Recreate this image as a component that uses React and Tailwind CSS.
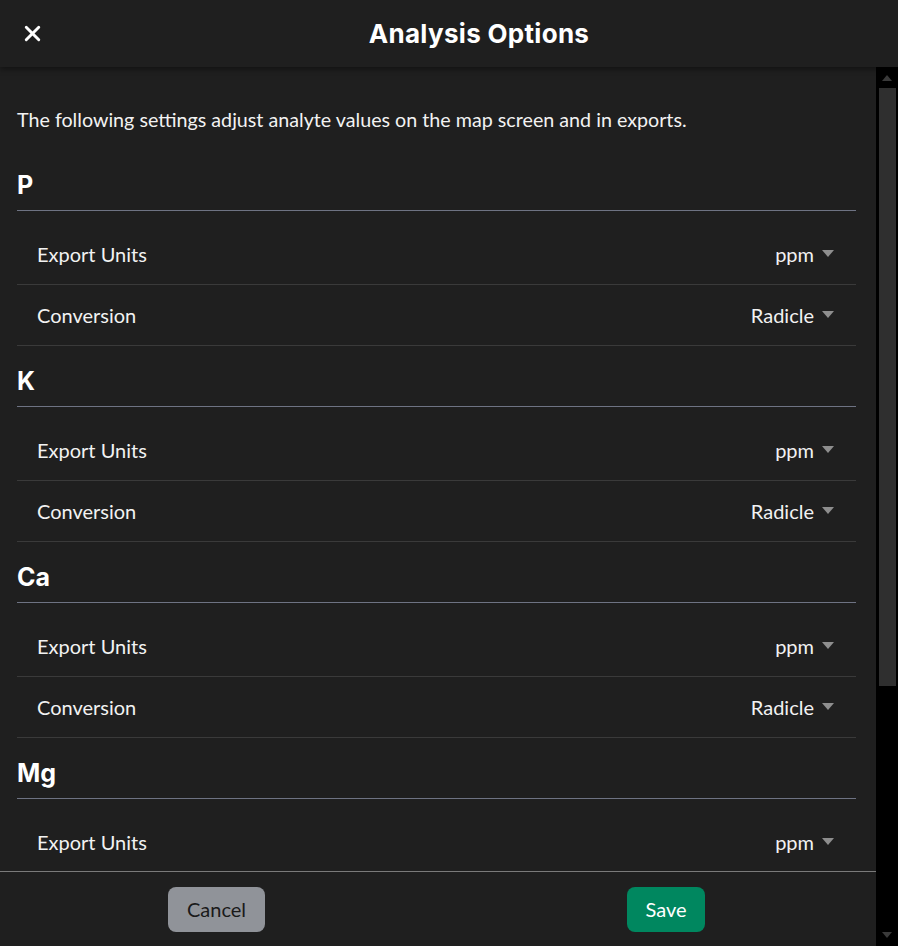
import { X } from "lucide-react";

const sections = ["P", "K", "Ca", "Mg"];

function Caret() {
  return (
    <svg width="12" height="7" viewBox="0 0 12 7" className="ml-[8px] mt-[-2px]">
      <path d="M0 0 L12 0 L6 7 Z" fill="#8e8e8e" />
    </svg>
  );
}

function Row({ label, value }) {
  return (
    <div className="flex h-[61px] items-center justify-between border-b border-[#3a3a3a] pl-[20px] pr-[22px]">
      <span className="text-[20px] text-[#f2f2f2]">{label}</span>
      <span className="flex items-center text-[20px] text-[#f2f2f2]">
        {value}
        <Caret />
      </span>
    </div>
  );
}

export default function App() {
  return (
    <div
      className="flex h-[946px] w-[898px] flex-col bg-[#1f1f1f] text-white"
      style={{ fontFamily: "Lato, 'Open Sans', sans-serif" }}
    >
      {/* Header */}
      <div className="relative z-10 flex h-[67px] shrink-0 items-center bg-[#1f1f1f] shadow-[0_2px_6px_rgba(0,0,0,0.45)]">
        <button className="ml-[20px] w-[40px] text-white">
          <X size={25} strokeWidth={2.8} />
        </button>
        <h1
          className="flex-1 text-center text-[26px] font-bold tracking-[0.3px]"
          style={{ fontFamily: "Inter, 'Noto Sans', sans-serif" }}
        >
          Analysis Options
        </h1>
      </div>

      {/* Body */}
      <div className="flex min-h-0 flex-1">
        <div className="flex-1 overflow-hidden pl-[17px] pr-[20px]">
          <p className="mt-[41px] text-[19.7px] leading-[24px] text-[#f2f2f2]">
            The following settings adjust analyte values on the map screen and in exports.
          </p>
          <div className="mt-[18px]">
            {sections.map((s, i) => (
              <div key={s}>
                <div
                  className="flex h-[61px] items-end border-b border-[#6e7383] pb-[10px] text-[25px] font-bold leading-[30px]"
                  style={{ fontFamily: "Inter, 'Noto Sans', sans-serif" }}
                >
                  {s}
                </div>
                <div className="pt-[13px]">
                  <Row label="Export Units" value="ppm" />
                  {i < 3 && <Row label="Conversion" value="Radicle" />}
                </div>
              </div>
            ))}
          </div>
        </div>
        {/* Scrollbar */}
        <div className="flex w-[22px] shrink-0 flex-col items-center bg-black">
          <svg width="10" height="6" viewBox="0 0 10 6" className="mt-[8px]">
            <path d="M0 6 L10 6 L5 0 Z" fill="#3a3a3a" />
          </svg>
          <div className="mt-[7px] h-[598px] w-[17px] bg-[#2f2f2f]" />
        </div>
      </div>

      {/* Footer */}
      <div className="flex h-[75px] shrink-0">
        <div className="flex flex-1 items-center border-t border-[#7a7a7a]">
          <div className="flex flex-1 justify-center">
            <button className="ml-[-5px] h-[45px] w-[97px] rounded-[8px] bg-[#909399] text-[20px] text-[#1a1a1a]">
              Cancel
            </button>
          </div>
          <div className="flex flex-1 justify-center">
            <button className="ml-[18px] h-[45px] w-[78px] rounded-[8px] bg-[#00875f] text-[20px] text-white">
              Save
            </button>
          </div>
        </div>
        <div className="flex w-[22px] shrink-0 flex-col items-center justify-end bg-black pb-[8px]">
          <svg width="10" height="6" viewBox="0 0 10 6">
            <path d="M0 0 L10 0 L5 6 Z" fill="#3a3a3a" />
          </svg>
        </div>
      </div>
    </div>
  );
}
